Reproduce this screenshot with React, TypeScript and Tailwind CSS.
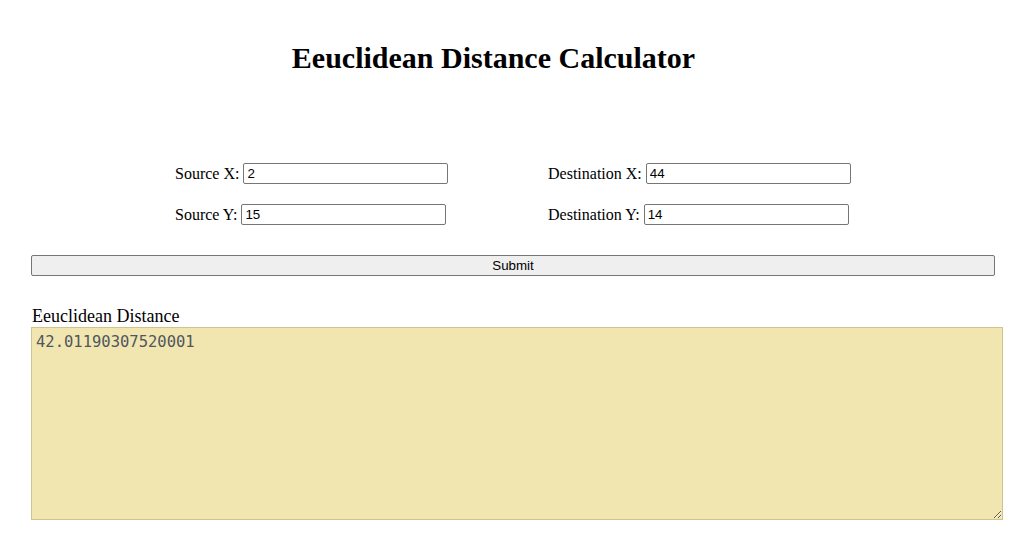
export default function App() {
  return (
    <main className="min-h-screen bg-white text-black font-['Liberation_Serif',serif]">
      <h1 className="w-[987px] pt-[40px] text-center text-[30px] font-bold leading-[35px]">
        Eeuclidean Distance Calculator
      </h1>

      <div className="mt-[88px] grid grid-cols-[373px_1fr] gap-y-[20px] pl-[175px] text-[16px]">
        <label className="flex h-[21px] items-center">
          Source X:
          <input
            type="text"
            defaultValue="2"
            className="ml-[4px] h-[21px] w-[205px] rounded-[2px] border border-[#767676] px-[3px] font-['Liberation_Sans',sans-serif] text-[13.33px]"
          />
        </label>
        <label className="flex h-[21px] items-center">
          Destination X:
          <input
            type="text"
            defaultValue="44"
            className="ml-[4px] h-[21px] w-[205px] rounded-[2px] border border-[#767676] px-[3px] font-['Liberation_Sans',sans-serif] text-[13.33px]"
          />
        </label>
        <label className="flex h-[21px] items-center">
          Source Y:
          <input
            type="text"
            defaultValue="15"
            className="ml-[4px] h-[21px] w-[205px] rounded-[2px] border border-[#767676] px-[3px] font-['Liberation_Sans',sans-serif] text-[13.33px]"
          />
        </label>
        <label className="flex h-[21px] items-center">
          Destination Y:
          <input
            type="text"
            defaultValue="14"
            className="ml-[4px] h-[21px] w-[205px] rounded-[2px] border border-[#767676] px-[3px] font-['Liberation_Sans',sans-serif] text-[13.33px]"
          />
        </label>
      </div>

      <div className="pl-[31px]">
        <button className="mt-[30px] h-[21px] w-[964px] rounded-[2px] border border-[#767676] bg-[#efefef] font-['Liberation_Sans',sans-serif] text-[13.33px] leading-none">
          Submit
        </button>

        <div className="mt-[29px] pl-[1px] text-[18px] leading-[21px]">Eeuclidean Distance</div>
        <textarea
          readOnly
          defaultValue="42.01190307520001"
          className="block h-[193px] w-[972px] border border-[#cfc390] bg-[#f1e6b0] px-[4px] py-[4px] font-['DejaVu_Sans_Mono',monospace] text-[15.5px] leading-[20px] text-[#50565f] outline-none"
        />
      </div>
    </main>
  );
}
